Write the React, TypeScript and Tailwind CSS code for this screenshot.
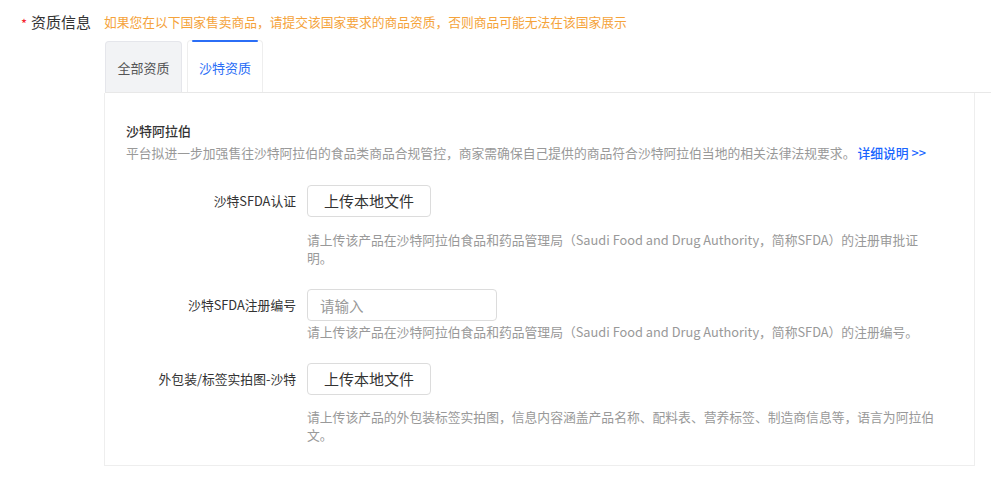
import { useState } from "react";

const fields = [
  {
    label: "沙特SFDA认证",
    kind: "upload",
    help: "请上传该产品在沙特阿拉伯食品和药品管理局（Saudi Food and Drug Authority，简称SFDA）的注册审批证明。",
    helpGap: "mt-[14px]",
  },
  {
    label: "沙特SFDA注册编号",
    kind: "input",
    help: "请上传该产品在沙特阿拉伯食品和药品管理局（Saudi Food and Drug Authority，简称SFDA）的注册编号。",
    helpGap: "mt-[2px]",
  },
  {
    label: "外包装/标签实拍图-沙特",
    kind: "upload",
    help: "请上传该产品的外包装标签实拍图，信息内容涵盖产品名称、配料表、营养标签、制造商信息等，语言为阿拉伯文。",
    helpGap: "mt-[13px]",
  },
];

const tabs = ["全部资质", "沙特资质"];

export default function App() {
  const [active, setActive] = useState(1);

  return (
    <div className="w-[991px] h-[493px] overflow-hidden bg-white text-[#333] font-['Noto_Sans_CJK_SC','Noto_Sans',sans-serif]">
      {/* header */}
      <div className="flex h-[20px] items-center pl-[21px] mt-[12px]">
        <span className="text-[13px] leading-none text-[#f5222d] mr-[4px] mt-[2px]">*</span>
        <span className="text-[15px] text-[#333]">资质信息</span>
        <span className="ml-[13px] text-[12.75px] text-[#f5a33b]">
          如果您在以下国家售卖商品，请提交该国家要求的商品资质，否则商品可能无法在该国家展示
        </span>
      </div>

      {/* tabs */}
      <div className="ml-[105px] mt-[9px] flex h-[52px] items-end gap-[5px] border-b border-[#e8e8e8]">
        {tabs.map((t, i) => {
          const on = i === active;
          return (
            <button
              key={t}
              onClick={() => setActive(i)}
              className={
                on
                  ? "relative flex h-[52px] w-[76px] items-center justify-center rounded-t-[4px] border border-b-0 border-[#eeeeee] bg-white pt-[2px] text-[13px] text-[#2b6ef6]"
                  : "relative flex h-[51px] w-[77px] items-center justify-center rounded-t-[4px] border border-b-0 border-[#e5e6eb] bg-[#f2f3f5] pt-[2px] text-[13px] text-[#555]"
              }
            >
              {on && (
                <span className="absolute left-[4px] right-[4px] top-[-1px] h-[2px] rounded-full bg-[#2b6ef6]" />
              )}
              {t}
            </button>
          );
        })}
      </div>

      {/* panel */}
      <div className="ml-[104px] mr-[16px] border border-t-0 border-[#eeeeee] pl-[21px] pt-[30px] pb-[21px]">
        <div className="text-[13px] font-medium leading-[16px] text-[#333]">沙特阿拉伯</div>
        <div className="mt-[5px] text-[12.8px] leading-[18px] text-[#999]">
          平台拟进一步加强售往沙特阿拉伯的食品类商品合规管控，商家需确保自己提供的商品符合沙特阿拉伯当地的相关法律法规要求。
          <a className="ml-[2px] font-medium text-[#1966ff]">详细说明 &gt;&gt;</a>
        </div>

        <div className="mt-[23px] flex flex-col gap-[22px]">
          {fields.map((f) => (
            <div key={f.label} className="grid grid-cols-[170px_1fr] gap-x-[11px]">
              <div className="flex h-[32px] items-center justify-end text-[12.8px] text-[#333]">
                {f.label}
              </div>
              <div>
                {f.kind === "upload" ? (
                  <button className="h-[32px] w-[124px] rounded-[4px] border border-[#dcdcdc] bg-white text-[15px] text-[#333]">
                    上传本地文件
                  </button>
                ) : (
                  <input
                    placeholder="请输入"
                    className="h-[32px] w-[190px] rounded-[4px] border border-[#dcdcdc] px-[12px] text-[14.5px] outline-none placeholder:text-[#999]"
                  />
                )}
                <p className={`${f.helpGap} max-w-[630px] text-[12.8px] leading-[18px] text-[#999]`}>
                  {f.help}
                </p>
              </div>
            </div>
          ))}
        </div>
      </div>
    </div>
  );
}
